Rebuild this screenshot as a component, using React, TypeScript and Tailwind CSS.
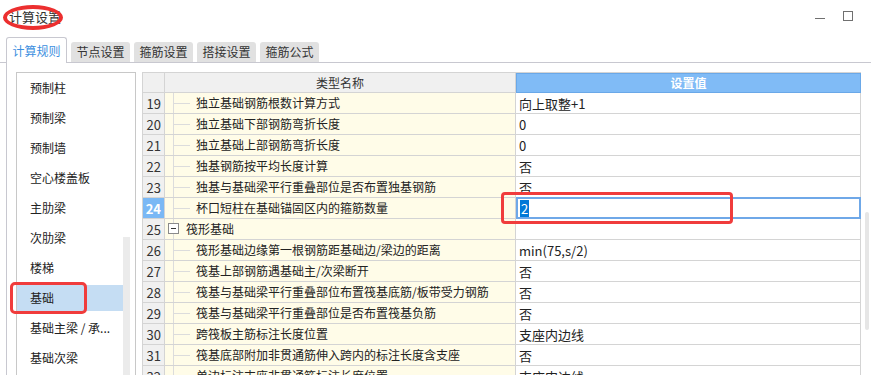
const tabs = ["计算规则", "节点设置", "箍筋设置", "搭接设置", "箍筋公式"];

const sideItems = [
  "预制柱",
  "预制梁",
  "预制墙",
  "空心楼盖板",
  "主肋梁",
  "次肋梁",
  "楼梯",
  "基础",
  "基础主梁 / 承...",
  "基础次梁",
];

type Row = { no: number; name: string; value: string; group?: boolean; editing?: boolean };

const rows: Row[] = [
  { no: 19, name: "独立基础钢筋根数计算方式", value: "向上取整+1" },
  { no: 20, name: "独立基础下部钢筋弯折长度", value: "0" },
  { no: 21, name: "独立基础上部钢筋弯折长度", value: "0" },
  { no: 22, name: "独基钢筋按平均长度计算", value: "否" },
  { no: 23, name: "独基与基础梁平行重叠部位是否布置独基钢筋", value: "否" },
  { no: 24, name: "杯口短柱在基础锚固区内的箍筋数量", value: "2", editing: true },
  { no: 25, name: "筏形基础", value: "", group: true },
  { no: 26, name: "筏形基础边缘第一根钢筋距基础边/梁边的距离", value: "min(75,s/2)" },
  { no: 27, name: "筏基上部钢筋遇基础主/次梁断开", value: "否" },
  { no: 28, name: "筏基与基础梁平行重叠部位布置筏基底筋/板带受力钢筋", value: "否" },
  { no: 29, name: "筏基与基础梁平行重叠部位是否布置筏基负筋", value: "否" },
  { no: 30, name: "跨筏板主筋标注长度位置", value: "支座内边线" },
  { no: 31, name: "筏基底部附加非贯通筋伸入跨内的标注长度含支座", value: "否" },
  { no: 32, name: "单边标注支座非贯通筋标注长度位置", value: "支座内边线" },
];

function TreeLines({ group }: { group?: boolean }) {
  return (
    <svg width="31" height="20" className="shrink-0">
      <line x1="8.5" y1="0" x2="8.5" y2="20" stroke="#dcdcdc" />
      {group ? (
        <>
          <rect x="3.5" y="4.5" width="10" height="10" fill="#fff" stroke="#8a8a8a" />
          <line x1="6" y1="9.5" x2="11" y2="9.5" stroke="#333" />
        </>
      ) : (
        <line x1="9" y1="10.5" x2="25" y2="10.5" stroke="#dcdcdc" />
      )}
    </svg>
  );
}

export default function App() {
  return (
    <div className="relative w-[871px] h-[375px] overflow-hidden bg-white text-[#222] font-['Noto_Sans_CJK_SC','Microsoft_YaHei',sans-serif] text-[12px] leading-none">
      {/* Title bar */}
      <div className="h-[37px] flex items-start justify-between">
        <div className="pl-[9px] pt-[10px] text-[13px] text-[#333]">计算设置</div>
        <div className="flex items-end gap-[18px] pt-[11px] pr-[18px]">
          <div className="w-[10px] h-px bg-[#707070] mb-[2px]" />
          <div className="w-[10px] h-[10px] border border-[#707070]" />
        </div>
      </div>

      {/* Tabs */}
      <div className="h-[26px] flex items-end gap-[4px] pl-[6px] border-b border-[#c8c8d0]">
        {tabs.map((t, i) =>
          i === 0 ? (
            <div
              key={t}
              className="h-[26px] w-[61px] -mb-px bg-white border border-b-0 border-[#c8c8d0] rounded-t-[3px] flex items-center justify-center text-[#3d8fe0]"
            >
              {t}
            </div>
          ) : (
            <div
              key={t}
              className="h-[20px] w-[59px] bg-[#e1e1e1] rounded-t-[3px] flex items-center justify-center text-[#333]"
            >
              {t}
            </div>
          )
        )}
      </div>

      {/* Content */}
      <div className="ml-[6px] border-l border-[#c8c8d0] h-[312px] pl-[9px] pt-[9px] flex">
        {/* Left list */}
        <div className="w-[120px] h-[320px] border border-[#c8c8c8] flex pt-[2px]">
          <div className="w-[106px] flex flex-col">
            {sideItems.map((s) => (
              <div
                key={s}
                className={`h-[26px] mb-[4px] flex items-center pl-[13px] whitespace-nowrap ${
                  s === "基础" ? "bg-[#c5ddf3]" : ""
                }`}
              >
                {s}
              </div>
            ))}
          </div>
          <div className="w-[7px]">
            <div className="mt-[162px] h-[160px] bg-[#ebebeb]" />
          </div>
        </div>

        {/* Grid */}
        <div className="ml-[6px] border-l border-t border-[#d4d4d4] w-[719px] flex flex-col">
          <div className="flex h-[20px] shrink-0">
            <div className="w-[22px] bg-[#f0f0f0] border-r border-b border-[#d4d4d4]" />
            <div className="w-[351px] bg-[#f0f0f0] border-r border-b border-[#d4d4d4] flex items-center justify-center text-[#333]">
              类型名称
            </div>
            <div className="w-[345px] bg-[#80bbf6] border border-[#6aa8e8] flex items-center justify-center text-white font-bold">
              设置值
            </div>
          </div>
          {rows.map((r) => (
            <div key={r.no} className="flex h-[21px] shrink-0">
              <div
                className={`w-[22px] border-r border-b border-[#d4d4d4] flex items-center justify-end pr-[3px] text-[13px] ${
                  r.editing ? "bg-[#7ab8f5] text-white font-bold" : "bg-[#f0f0f0] text-[#333]"
                }`}
              >
                {r.no}
              </div>
              <div className="w-[351px] bg-[#fffce8] border-r border-b border-[#d4d4d4] flex items-center whitespace-nowrap overflow-hidden">
                <TreeLines group={r.group} />
                <span className={r.group ? "-ml-[10px]" : ""}>{r.name}</span>
              </div>
              {r.editing ? (
                <div className="w-[345px] border-2 border-[#6fa8e8] -mt-px flex items-center pl-[2px]">
                  <span className="bg-[#0078d7] text-white text-[13px] px-px py-[2px]">{r.value}</span>
                </div>
              ) : (
                <div className="w-[345px] border-r border-b border-[#d4d4d4] flex items-center pl-[3px] whitespace-nowrap text-[13px]">
                  {r.value}
                </div>
              )}
            </div>
          ))}
        </div>

        {/* Right scrollbar */}
        <div className="ml-[4px] w-[4px]">
          <div className="mt-[140px] h-[118px] rounded-full bg-[#e6e6e6]" />
        </div>
      </div>

      {/* Red annotations */}
      <div className="absolute left-[3px] top-[5px] w-[60px] h-[25px] rounded-[50%] border-[4px] border-[#ec2f2f]" />
      <div className="absolute left-[10px] top-[282px] w-[77px] h-[32px] rounded-[5px] border-[3px] border-[#f03c3c]" />
      <div className="absolute left-[501px] top-[192px] w-[232px] h-[32px] rounded-[4px] border-[3px] border-[#f03c3c]" />
    </div>
  );
}
